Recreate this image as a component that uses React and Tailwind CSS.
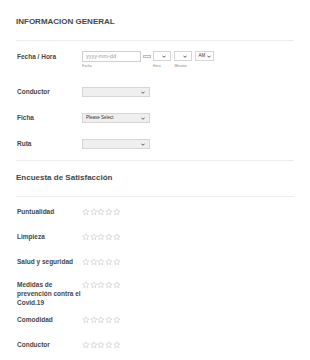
import React from "react";

const Chevron = ({ className = "" }) => (
  <svg viewBox="0 0 10 6" className={`w-[4px] h-[3px] ${className}`} fill="none">
    <path d="M1 1l4 4 4-4" stroke="#333" strokeWidth="2" />
  </svg>
);

const FakeSelect = ({ width, text, white, className = "" }) => (
  <div
    className={`flex items-center justify-between h-[10px] border border-[#d6d6d6] pl-[3px] pr-[4px] ${
      white ? "bg-white" : "bg-[#efefef]"
    } ${className}`}
    style={{ width }}
  >
    <span className="text-[4.5px] leading-none text-[#333]">{text}</span>
    <Chevron />
  </div>
);

const Star = () => (
  <svg viewBox="0 0 24 24" className="w-[7.7px] h-[7.7px]" fill="none">
    <path
      d="M12 2.5l2.9 6.3 6.9.7-5.2 4.6 1.5 6.8L12 17.4l-6.1 3.5 1.5-6.8-5.2-4.6 6.9-.7z"
      stroke="#bdbdbd"
      strokeWidth="1.5"
      strokeLinejoin="round"
    />
  </svg>
);

const Stars = () => (
  <div className="flex items-center">
    {[0, 1, 2, 3, 4].map((i) => (
      <Star key={i} />
    ))}
  </div>
);

const Label = ({ children, className = "" }) => (
  <div className={`w-[66px] pl-px text-[6.5px] leading-[8px] font-bold text-[#464646] ${className}`}>
    {children}
  </div>
);

const ratings = [
  { label: "Puntualidad", mt: "mt-[11px]" },
  { label: "Limpieza", mt: "mt-[17px]" },
  { label: "Salud y seguridad", mt: "mt-[17px]" },
  { label: "Medidas de prevención contra el Covid.19", mt: "mt-[14px]", multi: true },
  { label: "Comodidad", mt: "mt-[9px]" },
  { label: "Conductor", mt: "mt-[17px]" },
];

export default function App() {
  return (
    <div
      className="w-[310px] h-[360px] bg-white overflow-hidden px-4"
      style={{ fontFamily: '"Liberation Sans", Arial, sans-serif' }}
    >
      <div className="pt-[17px] pb-[13px] border-b border-[#ececec]">
        <h2 className="text-[8px] leading-[10px] font-bold text-[#464646]">INFORMACION GENERAL</h2>
      </div>

      <div className="pb-[11px] border-b border-[#ececec]">
        {/* Fecha / Hora */}
        <div className="mt-[10px] flex items-start">
          <Label className="mt-[2px]">Fecha / Hora</Label>
          <div className="flex items-start">
            <div className="flex flex-col">
              <div className="w-[59px] h-[11px] border border-[#cfcfcf] flex items-center pl-[3px]">
                <span className="text-[5.5px] leading-none text-[#9a9a9a]">yyyy-mm-dd</span>
              </div>
              <span className="text-[3.5px] leading-[5px] mt-[2px] text-[#888]">Fecha</span>
            </div>
            <div className="ml-[2px] mt-[4px] w-[8px] h-[3px] border border-[#bdbdbd] bg-[#f4f4f4]" />
            <div className="flex flex-col ml-[2px]">
              <FakeSelect width="18px" white />
              <span className="text-[3.5px] leading-[5px] mt-[3px] text-[#888]">Hora</span>
            </div>
            <span className="text-[5px] leading-[10px] mx-[1px] text-[#aaa]">:</span>
            <div className="flex flex-col">
              <FakeSelect width="18px" white />
              <span className="text-[3.5px] leading-[5px] mt-[3px] text-[#888]">Minutos</span>
            </div>
            <FakeSelect width="19px" white text="AM" className="ml-[3px] !pl-[2px] !pr-[2px]" />
          </div>
        </div>

        <div className="mt-[18px] flex items-center">
          <Label>Conductor</Label>
          <FakeSelect width="68px" />
        </div>
        <div className="mt-[16px] flex items-center">
          <Label>Ficha</Label>
          <FakeSelect width="68px" text="Please Select" />
        </div>
        <div className="mt-[16px] flex items-center">
          <Label>Ruta</Label>
          <FakeSelect width="68px" />
        </div>
      </div>

      <div className="pt-[12px] pb-[13px] border-b border-[#ececec]">
        <h2 className="text-[8px] leading-[10px] font-bold text-[#464646]">Encuesta de Satisfacción</h2>
      </div>

      <div className="flex flex-col">
        {ratings.map((r) => (
          <div key={r.label} className={`${r.mt} flex items-start`}>
            <Label className={r.multi ? "leading-[9px]" : ""}>{r.label}</Label>
            <div className={r.multi ? "mt-[1px]" : ""}>
              <Stars />
            </div>
          </div>
        ))}
      </div>
    </div>
  );
}
